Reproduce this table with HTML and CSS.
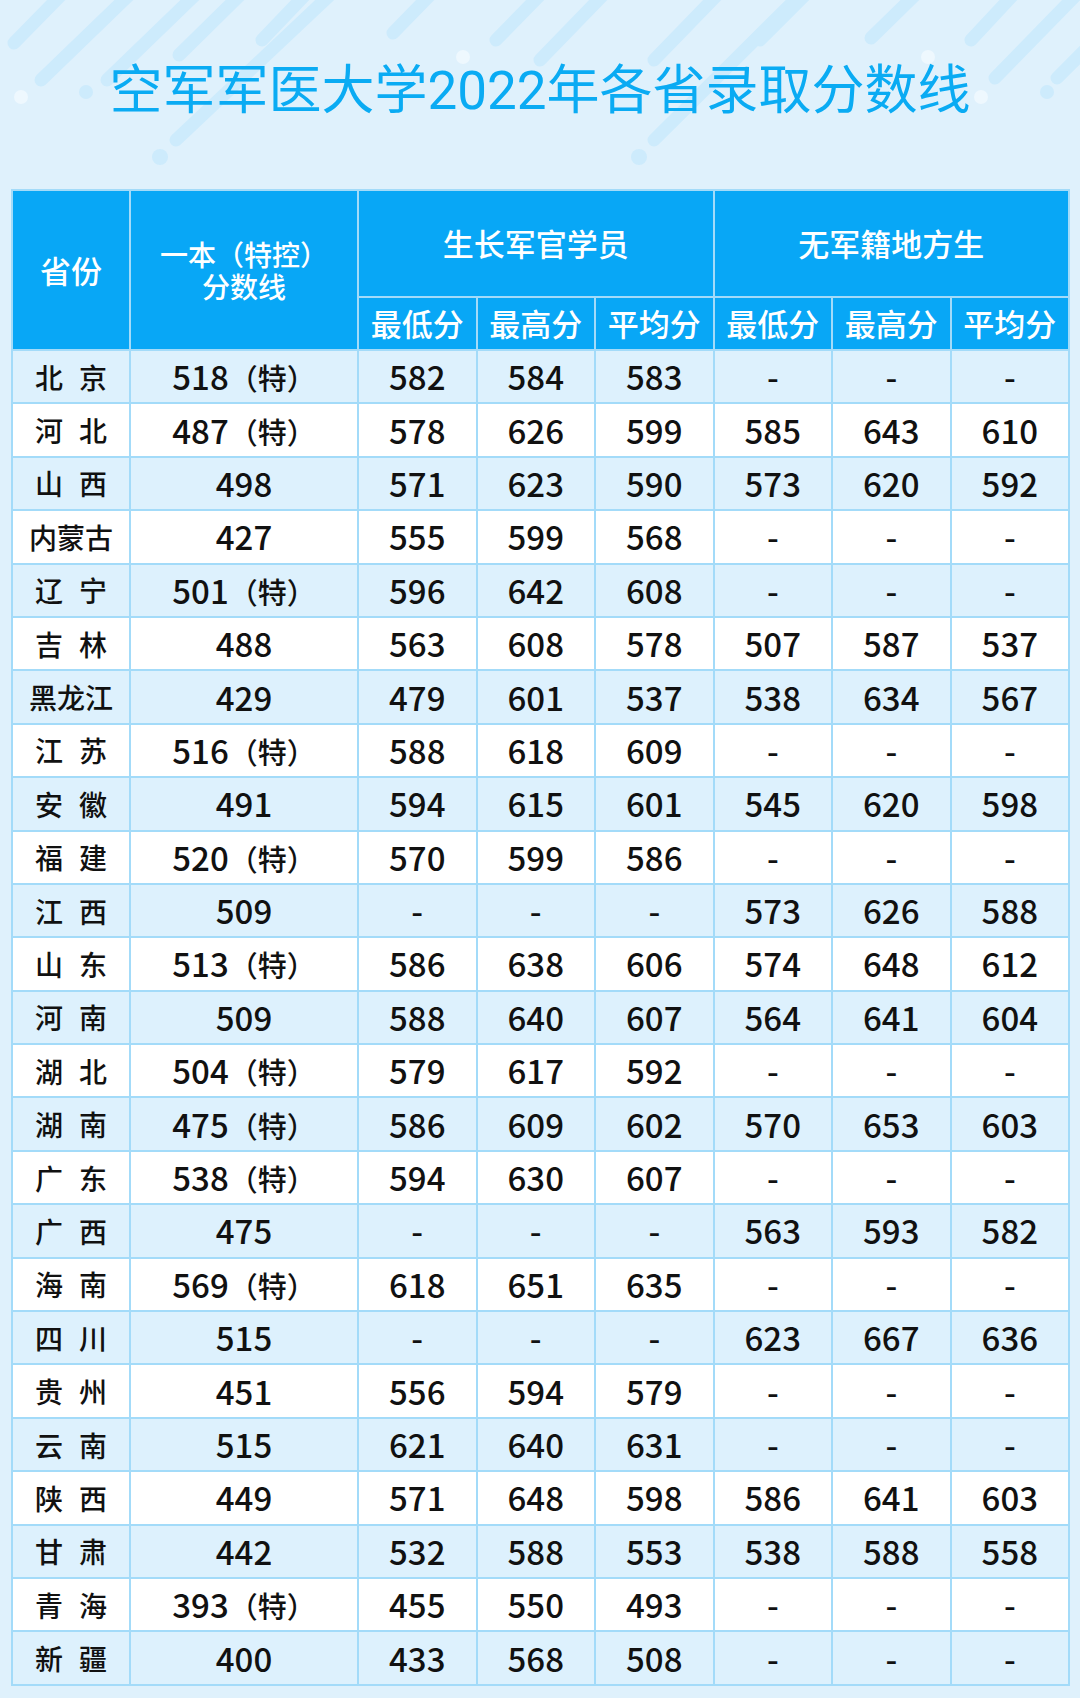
FILE: index.html
```html
<!DOCTYPE html>
<html lang="zh-CN">
<head>
<meta charset="utf-8">
<title>空军军医大学2022年各省录取分数线</title>
<link rel="stylesheet" href="styles.css">
</head>
<body>
<div class="page">
  <svg class="deco" width="1080" height="190" viewBox="0 0 1080 190" aria-hidden="true">
    <g stroke="#cdebfc" stroke-width="13" stroke-linecap="round" fill="none">
      <line x1="14" y1="43" x2="61" y2="-5"/>
      <line x1="41" y1="80" x2="129" y2="-5"/>
      <line x1="107" y1="80" x2="195" y2="-5"/>
      <line x1="179" y1="55" x2="240" y2="-5"/>
      <line x1="176" y1="140" x2="330" y2="-5"/>
      <line x1="262" y1="40" x2="305" y2="-5"/>
      <line x1="393" y1="33" x2="430" y2="-5"/>
      <line x1="496" y1="40" x2="540" y2="-5"/>
      <line x1="540" y1="60" x2="603" y2="-5"/>
      <line x1="654" y1="60" x2="717" y2="-5"/>
      <line x1="654" y1="140" x2="800" y2="-5"/>
      <line x1="760" y1="40" x2="805" y2="-5"/>
      <line x1="871" y1="38" x2="915" y2="-5"/>
      <line x1="971" y1="40" x2="1013" y2="-5"/>
      <line x1="995" y1="78" x2="1076" y2="-5"/>
      <line x1="1057" y1="78" x2="1140" y2="-5"/>
    </g>
    <g fill="#cdebfc">
      <circle cx="86" cy="92" r="7"/>
      <circle cx="160" cy="157" r="8"/>
      <circle cx="639" cy="157" r="8"/>
      <circle cx="1047" cy="92" r="7"/>
    </g>
    <g fill="#eef8fe">
      <circle cx="21" cy="97" r="7"/>
      <circle cx="463" cy="57" r="7"/>
      <circle cx="928" cy="57" r="7"/>
      <circle cx="981" cy="97" r="7"/>
    </g>
  </svg>

  <h1 class="title">空军军医大学2022年各省录取分数线</h1>

  <table class="score">
    <colgroup>
      <col class="c-prov"><col class="c-base">
      <col class="c-num"><col class="c-num"><col class="c-num">
      <col class="c-num"><col class="c-num"><col class="c-num">
    </colgroup>
    <thead>
      <tr class="h1">
        <th rowspan="2" class="big">省份</th>
        <th rowspan="2" class="small"><div class="l">一本（特控）</div><div class="l">分数线</div></th>
        <th colspan="3" class="big">生长军官学员</th>
        <th colspan="3" class="big">无军籍地方生</th>
      </tr>
      <tr class="h2">
        <th>最低分</th><th>最高分</th><th>平均分</th>
        <th>最低分</th><th>最高分</th><th>平均分</th>
      </tr>
    </thead>
    <tbody>
      <tr><td class="pv"><span class="p2">北京</span></td><td>518<span class="t">（特）</span></td><td>582</td><td>584</td><td>583</td><td>-</td><td>-</td><td>-</td></tr>
      <tr><td class="pv"><span class="p2">河北</span></td><td>487<span class="t">（特）</span></td><td>578</td><td>626</td><td>599</td><td>585</td><td>643</td><td>610</td></tr>
      <tr><td class="pv"><span class="p2">山西</span></td><td>498</td><td>571</td><td>623</td><td>590</td><td>573</td><td>620</td><td>592</td></tr>
      <tr><td class="pv">内蒙古</td><td>427</td><td>555</td><td>599</td><td>568</td><td>-</td><td>-</td><td>-</td></tr>
      <tr><td class="pv"><span class="p2">辽宁</span></td><td>501<span class="t">（特）</span></td><td>596</td><td>642</td><td>608</td><td>-</td><td>-</td><td>-</td></tr>
      <tr><td class="pv"><span class="p2">吉林</span></td><td>488</td><td>563</td><td>608</td><td>578</td><td>507</td><td>587</td><td>537</td></tr>
      <tr><td class="pv">黑龙江</td><td>429</td><td>479</td><td>601</td><td>537</td><td>538</td><td>634</td><td>567</td></tr>
      <tr><td class="pv"><span class="p2">江苏</span></td><td>516<span class="t">（特）</span></td><td>588</td><td>618</td><td>609</td><td>-</td><td>-</td><td>-</td></tr>
      <tr><td class="pv"><span class="p2">安徽</span></td><td>491</td><td>594</td><td>615</td><td>601</td><td>545</td><td>620</td><td>598</td></tr>
      <tr><td class="pv"><span class="p2">福建</span></td><td>520<span class="t">（特）</span></td><td>570</td><td>599</td><td>586</td><td>-</td><td>-</td><td>-</td></tr>
      <tr><td class="pv"><span class="p2">江西</span></td><td>509</td><td>-</td><td>-</td><td>-</td><td>573</td><td>626</td><td>588</td></tr>
      <tr><td class="pv"><span class="p2">山东</span></td><td>513<span class="t">（特）</span></td><td>586</td><td>638</td><td>606</td><td>574</td><td>648</td><td>612</td></tr>
      <tr><td class="pv"><span class="p2">河南</span></td><td>509</td><td>588</td><td>640</td><td>607</td><td>564</td><td>641</td><td>604</td></tr>
      <tr><td class="pv"><span class="p2">湖北</span></td><td>504<span class="t">（特）</span></td><td>579</td><td>617</td><td>592</td><td>-</td><td>-</td><td>-</td></tr>
      <tr><td class="pv"><span class="p2">湖南</span></td><td>475<span class="t">（特）</span></td><td>586</td><td>609</td><td>602</td><td>570</td><td>653</td><td>603</td></tr>
      <tr><td class="pv"><span class="p2">广东</span></td><td>538<span class="t">（特）</span></td><td>594</td><td>630</td><td>607</td><td>-</td><td>-</td><td>-</td></tr>
      <tr><td class="pv"><span class="p2">广西</span></td><td>475</td><td>-</td><td>-</td><td>-</td><td>563</td><td>593</td><td>582</td></tr>
      <tr><td class="pv"><span class="p2">海南</span></td><td>569<span class="t">（特）</span></td><td>618</td><td>651</td><td>635</td><td>-</td><td>-</td><td>-</td></tr>
      <tr><td class="pv"><span class="p2">四川</span></td><td>515</td><td>-</td><td>-</td><td>-</td><td>623</td><td>667</td><td>636</td></tr>
      <tr><td class="pv"><span class="p2">贵州</span></td><td>451</td><td>556</td><td>594</td><td>579</td><td>-</td><td>-</td><td>-</td></tr>
      <tr><td class="pv"><span class="p2">云南</span></td><td>515</td><td>621</td><td>640</td><td>631</td><td>-</td><td>-</td><td>-</td></tr>
      <tr><td class="pv"><span class="p2">陕西</span></td><td>449</td><td>571</td><td>648</td><td>598</td><td>586</td><td>641</td><td>603</td></tr>
      <tr><td class="pv"><span class="p2">甘肃</span></td><td>442</td><td>532</td><td>588</td><td>553</td><td>538</td><td>588</td><td>558</td></tr>
      <tr><td class="pv"><span class="p2">青海</span></td><td>393<span class="t">（特）</span></td><td>455</td><td>550</td><td>493</td><td>-</td><td>-</td><td>-</td></tr>
      <tr><td class="pv"><span class="p2">新疆</span></td><td>400</td><td>433</td><td>568</td><td>508</td><td>-</td><td>-</td><td>-</td></tr>
    </tbody>
  </table>
</div>
</body>
</html>
```

FILE: styles.css
```css
html, body {
  margin: 0;
  padding: 0;
  background: #dff1fc;
}

.page {
  position: relative;
  width: 1080px;
  min-height: 1698px;
  background: #dff1fc;
  font-family: "Noto Sans CJK SC", sans-serif;
  overflow: hidden;
}

.deco {
  position: absolute;
  left: 0;
  top: 0;
  z-index: 0;
}

.title {
  position: relative;
  z-index: 1;
  margin: 0;
  padding-top: 59px;
  box-sizing: border-box;
  height: 189px;
  line-height: 65px;
  font-size: 53px;
  font-weight: 400;
  text-align: center;
  color: #0aabf3;
  font-family: Roboto, "Noto Sans CJK SC", sans-serif;
}

.score {
  position: relative;
  z-index: 1;
  margin-left: 11px;
  width: 1057px;
  table-layout: fixed;
  border-collapse: collapse;
  border: 2px solid #a3dbf9;
}

.c-prov { width: 118px; }
.c-base { width: 228px; }
.c-num { width: 118.5px; }

.score th,
.score td {
  border: 2px solid #a3dbf9;
  padding: 0;
  text-align: center;
  vertical-align: middle;
}

.score th {
  background: #08a7f6;
  color: #ffffff;
  font-family: "Noto Sans CJK SC", sans-serif;
  font-weight: 500;
  font-size: 31px;
  line-height: 1.1;
}

.score th.small {
  font-size: 28px;
  line-height: 32px;
}

.score th.small .l {
  height: 32px;
  line-height: 32px;
}

.h1 { height: 107px; }
.h2 { height: 53px; }

.score tbody tr { height: 53.4px; }

.score td {
  font-family: "Noto Sans CJK SC", sans-serif;
  font-size: 33px;
  font-weight: 500;
  color: #111111;
  line-height: 1;
}

.score td.pv {
  font-size: 28px;
}

.score td .t {
  font-size: 29px;
}

.score tbody tr:nth-child(odd) td { background: #ddf1fd; }
.score tbody tr:nth-child(even) td { background: #ffffff; }

.p2 {
  letter-spacing: 16px;
  padding-left: 16px;
}
```
